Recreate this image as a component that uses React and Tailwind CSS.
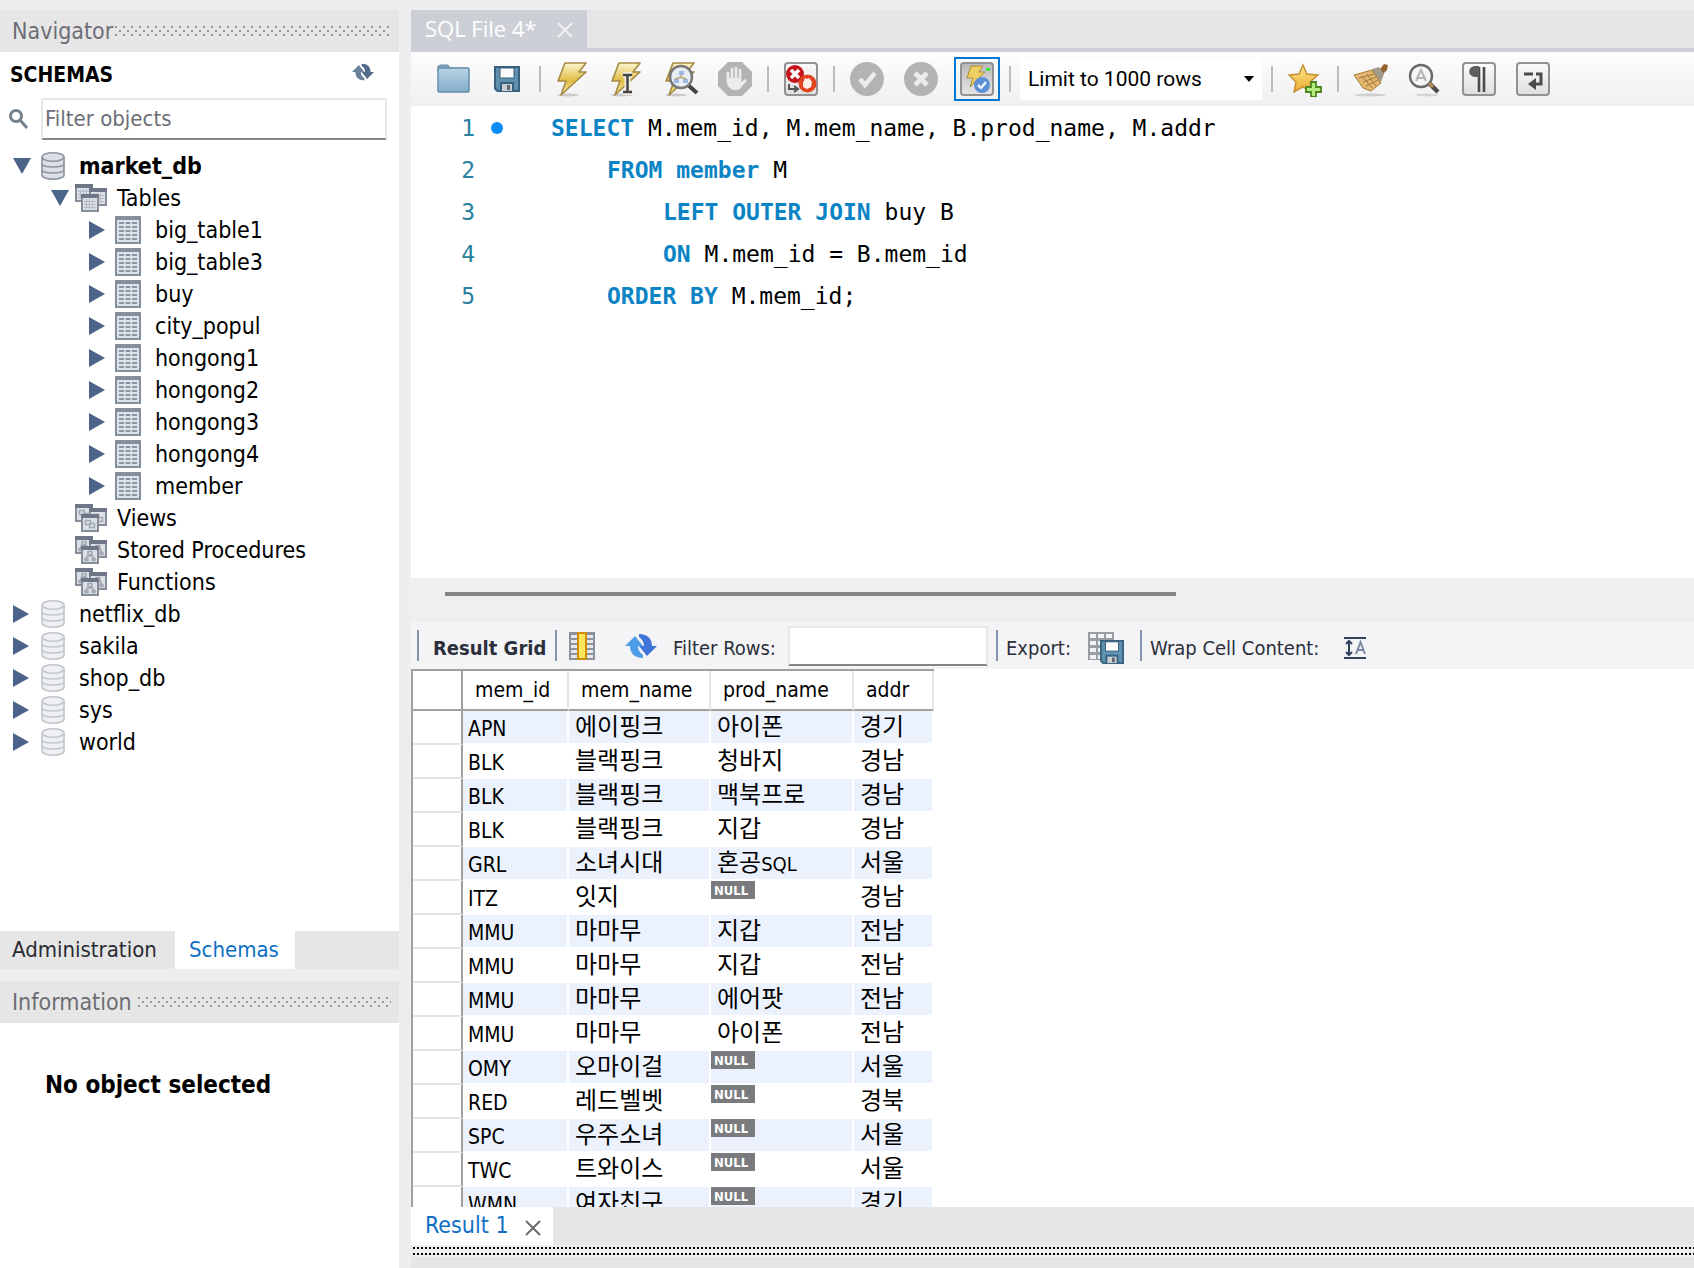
import { useState } from 'react';

const ui = "font-['DejaVu_Sans_Condensed','DejaVu_Sans',sans-serif]";
const td = 'p-0 h-[34px] border-b-2 border-r-2 border-white align-top whitespace-nowrap';
const th = 'p-0 pl-3 h-10 text-left font-normal text-[21px] leading-7 border-r-2 border-r-[#e4e4e4] border-b-2 border-b-[#a0a0a0]';
const toolBtn = 'flex w-[54px] h-[46px] shrink-0 items-center justify-center';

const TABLES = ['big_table1', 'big_table3', 'buy', 'city_popul', 'hongong1', 'hongong2', 'hongong3', 'hongong4', 'member'];
const SCHEMAS = ['netflix_db', 'sakila', 'shop_db', 'sys', 'world'];

const ROWS = [
  ['APN', '에이핑크', '아이폰', '경기'],
  ['BLK', '블랙핑크', '청바지', '경남'],
  ['BLK', '블랙핑크', '맥북프로', '경남'],
  ['BLK', '블랙핑크', '지갑', '경남'],
  ['GRL', '소녀시대', <>혼공<span className="text-[20px] leading-none">SQL</span></>, '서울'],
  ['ITZ', '잇지', null, '경남'],
  ['MMU', '마마무', '지갑', '전남'],
  ['MMU', '마마무', '지갑', '전남'],
  ['MMU', '마마무', '에어팟', '전남'],
  ['MMU', '마마무', '아이폰', '전남'],
  ['OMY', '오마이걸', null, '서울'],
  ['RED', '레드벨벳', null, '경북'],
  ['SPC', '우주소녀', null, '서울'],
  ['TWC', '트와이스', null, '서울'],
  ['WMN', '여자친구', null, '경기'],
];

const LEVELS = [
  { pad: 'pl-[13px]', arrow: 'w-7', gap: 'gap-3.5' },
  { pad: 'pl-[51px]', arrow: 'w-6', gap: 'gap-2.5' },
  { pad: 'pl-[89px]', arrow: 'w-[26px]', gap: 'gap-3.5' },
];

function Grip({ id }) {
  return (
    <svg className="h-2.5 min-w-0 flex-1" aria-hidden="true">
      <defs>
        <pattern id={id} width="8" height="8" patternUnits="userSpaceOnUse">
          <rect width="2" height="2" fill="#969696" />
          <rect x="4" y="4" width="2" height="2" fill="#969696" />
        </pattern>
      </defs>
      <rect width="100%" height="10" fill={`url(#${id})`} />
    </svg>
  );
}

function PanelHeader({ title, id, gap }) {
  return (
    <div className={`flex h-[42px] shrink-0 items-center bg-[#e6e6e6] pl-3 pr-2 ${gap}`}>
      <h2 className="text-[23px] leading-none text-[#6d6d75]">{title}</h2>
      <Grip id={id} />
    </div>
  );
}

function DbIcon({ active }) {
  const line = active ? '#8c949f' : '#c3c7cd';
  return (
    <svg width="24" height="28" viewBox="0 0 24 28" fill={active ? '#dcdfe8' : '#eff0f3'} stroke={line} strokeWidth="1.6">
      <path d="M1 5v18c0 2.500 5 4.200 11 4.200s11-1.700 11-4.200V5" />
      <ellipse cx="12" cy="5" rx="11" ry="4.200" />
      <path d="M1 11.500c0 2.200 5 3.500 11 3.500s11-1.300 11-3.500M1 17.500c0 2.200 5 3.500 11 3.500s11-1.300 11-3.500" fill="none" />
    </svg>
  );
}

function TableIcon() {
  return (
    <svg width="26" height="28" viewBox="0 0 26 28">
      <rect width="26" height="28" fill="#848f9b" />
      <rect x="2" y="4" width="22" height="22" fill="#dde2e8" />
      <path d="M4 7h18M4 11h18M4 15h18M4 19h18M4 23h18" stroke="#8b95a2" strokeWidth="2" strokeDasharray="5 1.500" />
    </svg>
  );
}

function GroupIcon({ kind }) {
  const win = (x, y) => (
    <g key={x} transform={`translate(${x} ${y})`}>
      <rect width="18" height="18" fill="#858d99" />
      <rect width="18" height="4" fill="#6e7785" />
      <rect x="2" y="4" width="14" height="12" fill="#dcdfe6" />
      {kind === 'table' && <path d="M3 7.500h12M3 10.500h12M3 13.500h12M5.500 5v10M8.500 5v10M11.500 5v10" stroke="#b4bac8" strokeWidth="1" />}
      {kind === 'view' && <path d="M4.500 6.500h5v4h-5zM8.500 9.500h5v4h-5z" fill="none" stroke="#a0a8b4" strokeWidth="1.500" />}
      {kind === 'code' && <path d="M7 5.500h4v3H7zM9 8v2M5 14l1-4h6l1 4M4 12.500h3v2H4zM11 12.500h3v2h-3z" fill="none" stroke="#a0a8b4" strokeWidth="1.400" />}
    </g>
  );
  return <svg width="32" height="28" viewBox="0 0 32 28">{win(0, 0)}{win(14, 4)}{win(6, 10)}</svg>;
}

function TreeRow({ level, open, leaf, icon, children, bold }) {
  const l = LEVELS[level];
  return (
    <li>
      <button className={`flex h-8 w-full items-center ${l.pad}`}>
        <span className={`${l.arrow} shrink-0`}>
          {!leaf && (
            <svg width="18" height="18" viewBox="0 0 18 18" fill="#4c6489">
              <path d={open ? 'M0 1h18L9 17z' : 'M0 0l16 9L0 18z'} />
            </svg>
          )}
        </span>
        <span className={`flex items-center ${l.gap}`}>
          {icon}
          <span className={`whitespace-nowrap text-[23px] leading-8 ${bold ? 'font-bold' : ''}`}>{children}</span>
        </span>
      </button>
    </li>
  );
}

function SyncIcon({ width, height, from, to }) {
  return (
    <svg width={width} height={height} viewBox="0 0 32 26">
      <path d="M0 13L10 3l8 10h-5c0 4 2 7 5 9v3C9 25 5 20 5 13z" fill={from} />
      <path d="M32 13L22 23l-8-10h5c0-4-2-7-5-9V1c9 0 13 5 13 12z" fill={to} />
    </svg>
  );
}

function Bolt({ children }) {
  return (
    <svg width="36" height="36" viewBox="0 0 36 36">
      <defs>
        <linearGradient id="bolt" x1="0" y1="0" x2="0" y2="1">
          <stop offset="0" stopColor="#fdf6cf" />
          <stop offset="0.550" stopColor="#dfbd45" />
          <stop offset="1" stopColor="#f7eda8" />
        </linearGradient>
      </defs>
      <ellipse cx="13" cy="34" rx="11" ry="1.500" fill="#c9c9c9" />
      <path d="M10 2h21l-7 9h7L6 34l5-14H3z" fill="url(#bolt)" stroke="#a48a42" strokeWidth="1.600" strokeLinejoin="round" />
      {children}
    </svg>
  );
}

function Plate({ children, dark }) {
  return (
    <svg width="36" height="36" viewBox="0 0 36 36">
      <defs>
        <linearGradient id={dark ? 'plateDark' : 'plate'} x1="0" y1="0" x2="0" y2="1">
          <stop offset="0" stopColor={dark ? '#b9b9b9' : '#fbfbfb'} />
          <stop offset="1" stopColor={dark ? '#e6e6e6' : '#dedede'} />
        </linearGradient>
      </defs>
      <rect x="2" y="2" width="32" height="32" rx="3" fill={dark ? 'url(#plateDark)' : 'url(#plate)'} stroke="#929292" strokeWidth="2" />
      {children}
    </svg>
  );
}

function Floppy({ size }) {
  return (
    <svg width={size} height={size} viewBox="0 0 26 26">
      <path d="M0 0h26v26H3l-3-3z" fill="#38617f" />
      <path d="M2 2h22v22H4l-2-2z" fill="#5f90ae" />
      <rect x="6" y="2" width="14" height="10" fill="#fbfbfb" stroke="#38617f" />
      <rect x="6" y="16" width="14" height="9" fill="#38617f" />
      <rect x="8" y="18" width="10" height="7" fill="#c9ced2" />
      <rect x="13" y="19" width="3" height="5" fill="#5c6570" />
    </svg>
  );
}

const folder = (
  <svg width="36" height="36" viewBox="0 0 36 36">
    <defs>
      <linearGradient id="folder" x1="0" y1="0" x2="0" y2="1">
        <stop offset="0" stopColor="#b9d4e5" />
        <stop offset="1" stopColor="#82adca" />
      </linearGradient>
    </defs>
    <path d="M3 8V5h1l1-1h8l2 3h18v4H3z" fill="#7ba4bf" stroke="#668fab" />
    <rect x="3" y="7" width="31" height="24" rx="1" fill="url(#folder)" stroke="#668fab" strokeWidth="1.500" />
  </svg>
);

const hand = (
  <svg width="36" height="36" viewBox="0 0 36 36">
    <path d="M11 1h14l10 10v14L25 35H11L1 25V11z" fill="#b3b3b3" />
    <path d="M11 20V12M15 18V8M19 18V7M23 18V9" fill="none" stroke="#ececec" strokeWidth="2.600" strokeLinecap="round" />
    <path d="M9.700 17h14.600v4l4-3 1.500 1.500-6 7.500c-3 3-8 3-11 0-2-2-3.100-4-3.100-7z" fill="#ececec" />
  </svg>
);

const stopOnError = (
  <Plate>
    <circle cx="12" cy="13" r="9" fill="#c4151c" />
    <path d="M8 9l8 8M16 9l-8 8" stroke="#fff" strokeWidth="3.500" />
    <path d="M6 23v5h8M11 25l4 3-4 3" fill="none" stroke="#555" strokeWidth="2" />
    <circle cx="24.500" cy="22.500" r="9" fill="#e1431f" />
    <path d="M20 22l2-5 2 1 2-1 3 4-1 5-4 2-4-2z" fill="#fdeee8" />
  </Plate>
);

const commit = (
  <svg width="36" height="36" viewBox="0 0 36 36">
    <circle cx="18" cy="18" r="17" fill="#b3b3b3" />
    <path d="M11 18l5 6 10-12" fill="none" stroke="#ececec" strokeWidth="4.500" />
  </svg>
);

const rollback = (
  <svg width="36" height="36" viewBox="0 0 36 36">
    <circle cx="18" cy="18" r="17" fill="#b3b3b3" />
    <path d="M12 12l12 12M24 12L12 24" stroke="#ececec" strokeWidth="5" />
  </svg>
);

const autoCommit = (
  <Plate dark>
    <path d="M12 5h12l-4 6h6L11 26l3-9H8z" fill="#f0cf62" stroke="#aa8c39" />
    <rect x="27" y="7" width="4" height="3" fill="#3be83b" />
    <circle cx="23" cy="24" r="8" fill="#5b8fd6" />
    <path d="M19 24l3 3 5-6" fill="none" stroke="#eef4fd" strokeWidth="2.500" />
  </Plate>
);

const star = (
  <svg width="36" height="36" viewBox="0 0 36 36">
    <defs>
      <linearGradient id="star" x1="0" y1="0" x2="0" y2="1">
        <stop offset="0" stopColor="#fbe58a" />
        <stop offset="1" stopColor="#eda82c" />
      </linearGradient>
    </defs>
    <path d="M16 4l4 9 11 1-8 7 2 11-9-6-9 5 2-10-7-7 10-1z" fill="url(#star)" stroke="#c38e2e" strokeWidth="1.400" />
    <path d="M24 21h5v5h5v5h-5v5h-5v-5h-5v-5h5z" fill="#b4ea7c" stroke="#4c8422" strokeWidth="1.800" />
  </svg>
);

const broom = (
  <svg width="36" height="36" viewBox="0 0 36 36">
    <ellipse cx="17" cy="34" rx="16" ry="1.500" fill="#cfcfcf" />
    <path d="M27 8l4-5 4 1-1 5-5 5z" fill="#94642e" />
    <path d="M19 8l7-2 5 7-3 8-9-7z" fill="#a49a8a" />
    <path d="M1 14l18-5 9 13-10 8-8-3z" fill="#e3b76f" stroke="#a67c3d" />
    <path d="M6 17l15-4M10 21l13-5M13 25l12-6M9 15l10 12M14 13l9 12" stroke="#a37a3c" strokeWidth="1" />
  </svg>
);

const find = (
  <svg width="36" height="36" viewBox="0 0 36 36">
    <ellipse cx="20" cy="34" rx="12" ry="1.500" fill="#d6d6d6" />
    <circle cx="14" cy="15" r="11" fill="#f6f6f6" stroke="#6a6a6a" strokeWidth="2.400" />
    <path d="M9 20l5-11 5 11M11 17h6" fill="none" stroke="#b3b3b3" strokeWidth="2" />
    <path d="M22 22l9 9" stroke="#4c4c4c" strokeWidth="4.500" />
    <path d="M22 22l4 4" stroke="#b89355" strokeWidth="3" />
  </svg>
);

const invisibles = (
  <Plate>
    <path d="M23 6v25M18 6v25" stroke="#4a4a4a" strokeWidth="2.600" />
    <path d="M25 5H15c-9 0-9 11 0 11h3V5z" fill="#5f5f5f" />
  </Plate>
);

const wrapText = (
  <Plate>
    <path d="M9 13h9M21 13h5v10h-6" fill="none" stroke="#4a4a4a" strokeWidth="3" />
    <path d="M21 17v12l-8-6z" fill="#4a4a4a" />
  </Plate>
);

const gridIcon = (
  <svg width="26" height="28" viewBox="0 0 26 28">
    <rect width="26" height="28" fill="#8c929b" />
    <path d="M2 4.500h22M2 9.500h22M2 14.500h22M2 19.500h22M2 24.500h22" stroke="#e6e8ea" strokeWidth="3" />
    <rect x="9" y="1" width="8" height="26" fill="#ffe65c" stroke="#cf8c06" strokeWidth="2" />
  </svg>
);

const wrapCell = (
  <svg width="22" height="22" viewBox="0 0 22 22" fill="none" stroke="#33405e">
    <path d="M0 1h22M0 21h22" strokeWidth="2" />
    <path d="M5 4v14M2 7l3-3 3 3M2 15l3 3 3-3" strokeWidth="2" />
    <path d="M12 17l4.500-12L21 17M13.500 13h6" stroke="#7c89a2" strokeWidth="2" />
  </svg>
);

function Close({ color }) {
  return (
    <svg width="16" height="16" viewBox="0 0 16 16" stroke={color} strokeWidth="2">
      <path d="M1 1l14 14M15 1L1 15" />
    </svg>
  );
}

function Separator() {
  return <span className="mx-[5px] h-[26px] w-0.5 shrink-0 bg-[#bcbcbc]" />;
}

function Tool({ label, children }) {
  return <button aria-label={label} className={toolBtn}>{children}</button>;
}

const K = ({ children }) => <span className="font-bold text-[#0a84c4]">{children}</span>;

const CODE = [
  { indent: '', text: <><K>SELECT</K> M.mem_id, M.mem_name, B.prod_name, M.addr</> },
  { indent: 'pl-14', text: <><K>FROM</K> <K>member</K> M</> },
  { indent: 'pl-28', text: <><K>LEFT OUTER JOIN</K> buy B</> },
  { indent: 'pl-28', text: <><K>ON</K> M.mem_id = B.mem_id</> },
  { indent: 'pl-14', text: <><K>ORDER BY</K> M.mem_id;</> },
];

function Navigator() {
  const [filter, setFilter] = useState('');
  return (
    <aside className="flex w-[399px] shrink-0 flex-col">
      <PanelHeader title="Navigator" id="gripNav" gap="gap-0.5" />
      <div className="flex min-h-0 flex-1 flex-col overflow-hidden bg-white">
        <div className="flex h-[46px] items-start justify-between pl-2.5 pr-6 pt-[11px]">
          <h3 className="text-[21px] leading-6 font-bold">SCHEMAS</h3>
          <button aria-label="Refresh schemas"><SyncIcon width={24} height={18} from="#6b819b" to="#526b8b" /></button>
        </div>
        <div className="flex h-[42px] items-center gap-3 pl-[9px] pr-3">
          <svg width="20" height="20" viewBox="0 0 20 20" className="shrink-0">
            <circle cx="7" cy="7" r="5.500" fill="none" stroke="#74808c" strokeWidth="3" />
            <path d="M11 11l7 8" stroke="#74808c" strokeWidth="3" />
          </svg>
          <input
            aria-label="Filter objects"
            value={filter}
            onChange={e => setFilter(e.target.value)}
            placeholder="Filter objects"
            className="h-[42px] min-w-0 flex-1 rounded-[2px] border-2 border-[#e8e8e8] border-b-[#858585] pb-0.5 pl-0.5 text-[22px] outline-none placeholder:text-[#6d6d75]"
          />
        </div>
        <ul className="pt-2.5">
          <TreeRow level={0} open bold icon={<DbIcon active />}>market_db</TreeRow>
          <TreeRow level={1} open icon={<GroupIcon kind="table" />}>Tables</TreeRow>
          {TABLES.map(t => <TreeRow key={t} level={2} icon={<TableIcon />}>{t}</TreeRow>)}
          <TreeRow level={1} leaf icon={<GroupIcon kind="view" />}>Views</TreeRow>
          <TreeRow level={1} leaf icon={<GroupIcon kind="code" />}>Stored Procedures</TreeRow>
          <TreeRow level={1} leaf icon={<GroupIcon kind="code" />}>Functions</TreeRow>
          {SCHEMAS.map(s => <TreeRow key={s} level={0} icon={<DbIcon />}>{s}</TreeRow>)}
        </ul>
      </div>
      <div className="flex h-[38px] shrink-0 bg-[#e6e6e6] text-[22px]">
        <button className="w-[175px] pb-0.5 pl-3 text-left text-[#2b2b33]">Administration</button>
        <button className="w-[120px] bg-white pb-0.5 pl-3.5 text-left text-[#0f6fc6]">Schemas</button>
      </div>
      <div className="mt-3 flex h-[287px] shrink-0 flex-col">
        <PanelHeader title="Information" id="gripInfo" gap="gap-1.5" />
        <div className="flex-1 bg-white pl-[45px] pt-[46px]">
          <p className="text-[24px] leading-8 font-bold">No object selected</p>
        </div>
      </div>
    </aside>
  );
}

function Toolbar() {
  return (
    <div className="flex h-[54px] shrink-0 items-center bg-linear-to-b from-[#fdfdfd] to-[#f0f0f0] pl-[15px]">
      <Tool label="Open">{folder}</Tool>
      <Tool label="Save"><Floppy size={26} /></Tool>
      <Separator />
      <Tool label="Execute"><Bolt /></Tool>
      <Tool label="Execute current statement">
        <Bolt><path d="M14 14h9M14 31h9M18.500 14v17" stroke="#f4efe0" strokeWidth="6" /><path d="M14 14h9M14 31h9M18.500 14v17" stroke="#454545" strokeWidth="2.500" /></Bolt>
      </Tool>
      <Tool label="Explain">
        <Bolt>
          <path d="M25 24l9 8" stroke="#444" strokeWidth="4" />
          <circle cx="18" cy="16" r="11" fill="#e9eef4" stroke="#777" strokeWidth="2.500" />
          <path d="M16 10h5v4h-5zM11 18h5v4h-5zM20 18h5v4h-5z" fill="#9db8e2" />
          <path d="M18 14v3M12 18l6-2 5 2" fill="none" stroke="#b7a66c" strokeWidth="1.500" />
        </Bolt>
      </Tool>
      <Tool label="Stop">{hand}</Tool>
      <Separator />
      <Tool label="Stop on error">{stopOnError}</Tool>
      <Separator />
      <Tool label="Commit">{commit}</Tool>
      <Tool label="Rollback">{rollback}</Tool>
      <button aria-label="Toggle autocommit" className="ml-1.5 mr-1 flex h-11 w-[46px] shrink-0 items-center justify-center border-2 border-[#0078d7]">{autoCommit}</button>
      <Separator />
      <div className="relative mx-1 h-[42px] w-[242px] shrink-0">
        <select aria-label="Row limit" className="h-full w-full appearance-none bg-white pt-0.5 pl-2 font-['Roboto',sans-serif] text-[21px] outline-none">
          <option>Limit to 1000 rows</option>
        </select>
        <svg width="10" height="6" viewBox="0 0 10 6" className="pointer-events-none absolute top-[18px] right-2"><path d="M0 0h10L5 6z" /></svg>
      </div>
      <Separator />
      <Tool label="Save snippet">{star}</Tool>
      <Separator />
      <Tool label="Beautify">{broom}</Tool>
      <Tool label="Find">{find}</Tool>
      <Tool label="Show invisible characters">{invisibles}</Tool>
      <Tool label="Wrap lines">{wrapText}</Tool>
    </div>
  );
}

function Bar() {
  return <span className="h-[31px] w-0.5 shrink-0 bg-[#8494ab]" />;
}

function ResultToolbar() {
  return (
    <div className="flex h-[47px] shrink-0 items-center bg-[#f4f4f7] pl-1.5 text-[20px] leading-6 whitespace-nowrap text-[#2b2f3b]">
      <Bar />
      <span className="w-[136px] pt-1 pl-3.5 font-bold">Result Grid</span>
      <Bar />
      <button aria-label="Reset sort" className="ml-3">{gridIcon}</button>
      <button aria-label="Refresh results" className="ml-[30px]"><SyncIcon width={32} height={28} from="#4e9be8" to="#3f74d8" /></button>
      <label htmlFor="filterRows" className="ml-4 w-[115px] pt-1">Filter Rows:</label>
      <input id="filterRows" className="h-10 w-[200px] border-2 border-[#e8e8e8] border-b-[#858585] bg-white px-2 outline-none" />
      <span className="w-2" />
      <Bar />
      <span className="w-[90px] pt-1 pl-2">Export:</span>
      <button aria-label="Export recordset" className="relative h-9 w-9">
        <svg width="26" height="28" viewBox="0 0 26 28">
          <rect width="26" height="28" fill="#969da5" />
          <path d="M2 4h22M2 11h22M2 18h22M2 25h22" stroke="#f2f3f4" strokeWidth="4" />
          <path d="M9 2v26M17 2v26" stroke="#969da5" strokeWidth="2" />
        </svg>
        <span className="absolute right-0 bottom-0"><Floppy size={24} /></span>
      </button>
      <span className="w-4" />
      <Bar />
      <span className="w-[202px] pt-1 pl-2">Wrap Cell Content:</span>
      <button aria-label="Wrap cell content" className="pt-1">{wrapCell}</button>
    </div>
  );
}

function ResultGrid() {
  return (
    <div className="min-h-0 flex-[538] overflow-hidden bg-white">
      <table className="w-[523px] table-fixed border-separate border-spacing-0 border-t-2 border-l-2 border-[#a0a0a0]">
        <colgroup>
          <col className="w-[50px]" />
          <col className="w-[106px]" />
          <col className="w-[142px]" />
          <col className="w-[143px]" />
          <col className="w-[80px]" />
        </colgroup>
        <thead>
          <tr>
            <th className="h-10 border-r-2 border-b-2 border-[#a0a0a0] p-0" />
            {['mem_id', 'mem_name', 'prod_name', 'addr'].map(h => <th key={h} className={th}>{h}</th>)}
          </tr>
        </thead>
        <tbody className="font-['DejaVu_Sans_Condensed','Noto_Sans_CJK_KR',sans-serif]">
          {ROWS.map(([id, name, prod, addr], i) => {
            const bg = i % 2 === 0 ? 'bg-[#ebf2fd]' : 'bg-white';
            return (
              <tr key={i}>
                <td className="h-[34px] border-r-2 border-b-2 border-r-[#a0a0a0] border-b-[#e4e4e4] p-0" />
                <td className={`${td} ${bg}`}><div className="h-8 pt-1 pl-[5px] text-[21px] leading-7">{id}</div></td>
                <td className={`${td} ${bg}`}><div className="h-8 pl-1.5 text-[24px] leading-8">{name}</div></td>
                <td className={`${td} ${bg}`}>
                  {prod
                    ? <div className="h-8 pl-1.5 text-[24px] leading-8">{prod}</div>
                    : <span className="flex h-[18px] w-11 items-center bg-[#797b7e] pl-[3px] text-[13px] leading-none font-bold text-white">NULL</span>}
                </td>
                <td className={`${td} ${bg}`}><div className="h-8 pl-1.5 text-[24px] leading-8">{addr}</div></td>
              </tr>
            );
          })}
        </tbody>
      </table>
    </div>
  );
}

export default function App() {
  return (
    <div className={`flex h-screen gap-3 overflow-hidden bg-[#eeeef0] pt-2.5 text-black ${ui}`}>
      <Navigator />
      <main className="flex min-w-0 flex-1 flex-col">
        <div className="flex h-[42px] shrink-0 border-b-4 border-[#cccfd6] bg-[#e6e6e6]">
          <div className="flex w-44 items-start gap-5 bg-[#cccfd6] pl-3.5 font-['Open_Sans',sans-serif] text-[22px] leading-9 whitespace-nowrap text-white">
            <span>SQL File 4*</span>
            <button aria-label="Close file" className="pt-3"><Close color="#f0f0f2" /></button>
          </div>
        </div>
        <Toolbar />
        <div className="min-h-0 flex-[472] overflow-hidden bg-white">
          <div className="pt-px font-['DejaVu_Sans_Mono',monospace] text-[23px] leading-[42px]">
            {CODE.map((line, i) => (
              <div key={i} className="flex h-[42px] items-center">
                <span className="w-16 text-right text-[#2b7f9f]">{i + 1}</span>
                <span className="flex w-[76px] pl-4">
                  {i === 0 && <span className="size-3 rounded-full bg-[#0a8cf5]" />}
                </span>
                <code className={`whitespace-pre font-['DejaVu_Sans_Mono',monospace] ${line.indent}`}>{line.text}</code>
              </div>
            ))}
          </div>
        </div>
        <div className="h-11 shrink-0 bg-[#efefef] pt-3.5 pl-[34px]">
          <div className="h-1 w-[731px] bg-[#858585]" />
        </div>
        <ResultToolbar />
        <ResultGrid />
        <div className="flex h-[38px] shrink-0 bg-[#e6e6e6]">
          <div className="flex w-[142px] items-center gap-4 bg-white pl-3.5 text-[23px] whitespace-nowrap text-[#0f6fc6]">
            <span className="pb-0.5">Result 1</span>
            <button aria-label="Close result" className="pt-1"><Close color="#6b6b6b" /></button>
          </div>
        </div>
        <div className="h-3 shrink-0 pt-0.5 pl-0.5">
          <div className="h-0.5 bg-[repeating-linear-gradient(90deg,#000_0_2px,transparent_2px_4px)]" />
          <div className="mt-1 h-0.5 bg-[repeating-linear-gradient(90deg,#000_0_2px,transparent_2px_4px)]" />
        </div>
        <div className="h-[11px] shrink-0 bg-[#e6e6e6]" />
      </main>
    </div>
  );
}
